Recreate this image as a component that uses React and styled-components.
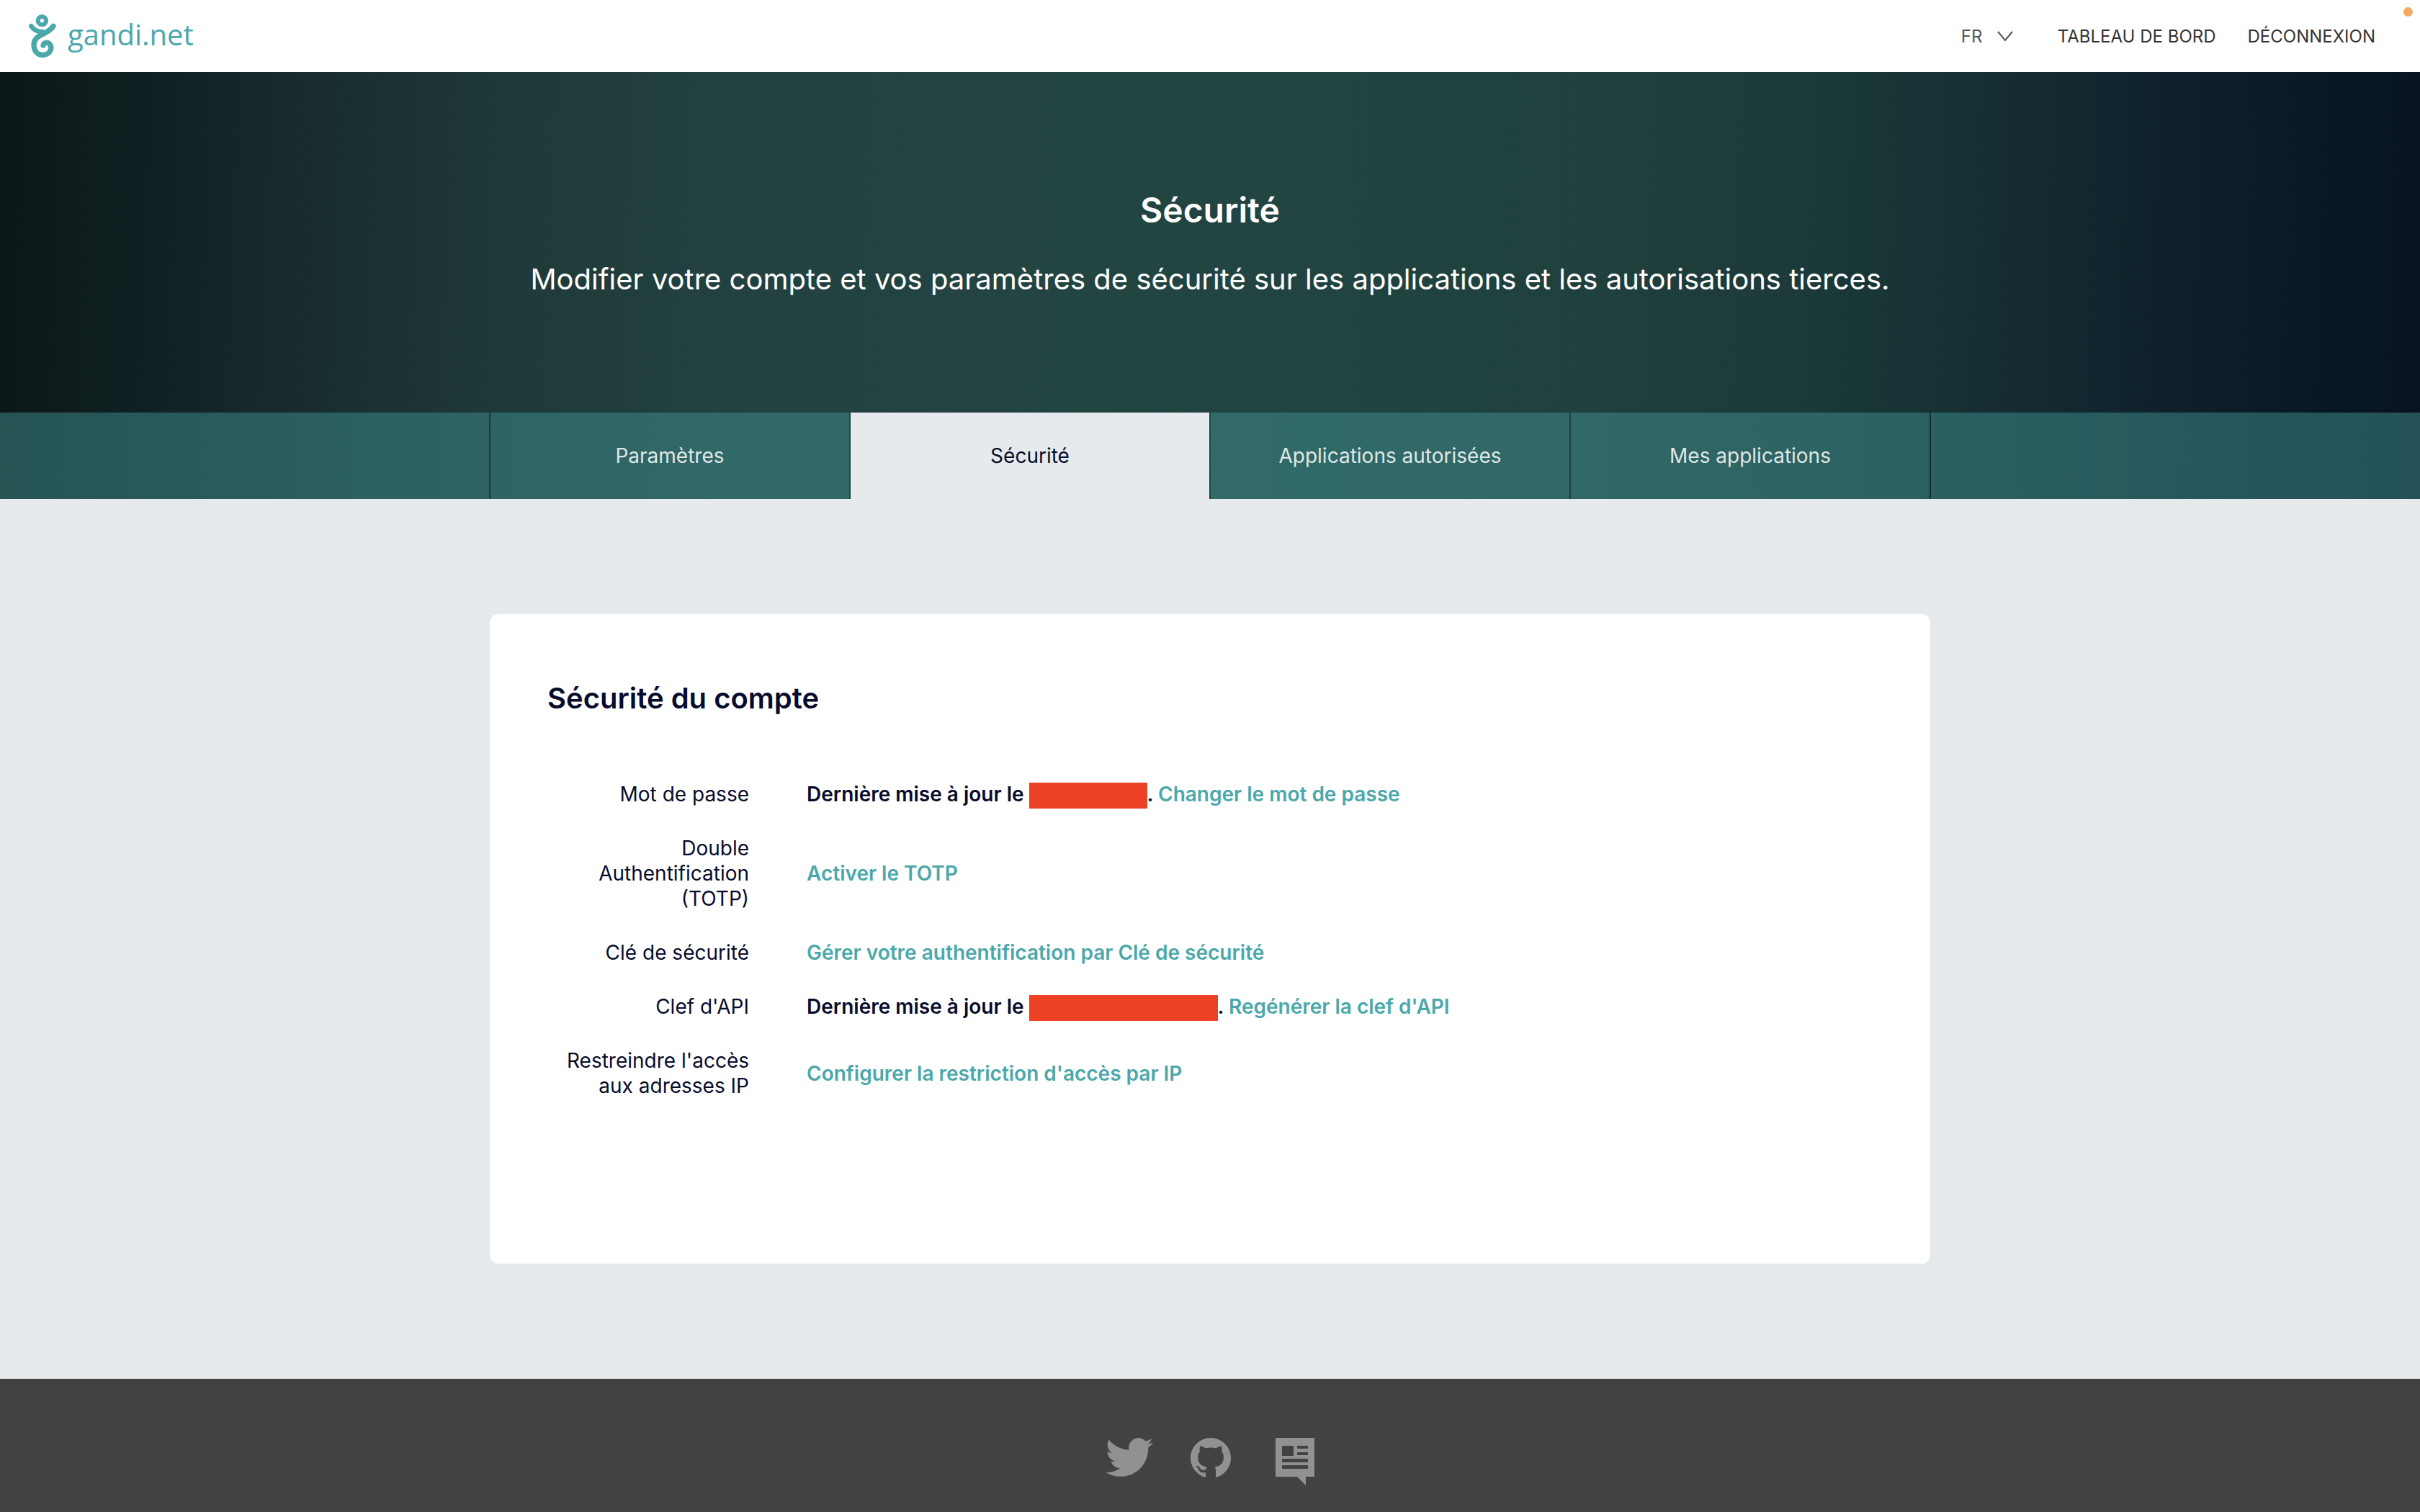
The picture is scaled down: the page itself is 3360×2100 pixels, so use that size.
import React from "react";
import styled, { createGlobalStyle } from "styled-components";
import { FaTwitter } from "react-icons/fa";

const colors = {
  ink: "#080c2c",
  teal: "#4aa8ab",
  surface: "#e6eaed",
  redacted: "#ec4125",
};

const GlobalStyle = createGlobalStyle`
  *, *::before, *::after { box-sizing: border-box; }
  body {
    margin: 0;
    font-family: Inter, "Liberation Sans", sans-serif;
    font-size: 28px;
    line-height: 35px;
    color: ${colors.ink};
    background: ${colors.surface};
  }
  h1, h2, p, dl, dt, dd { margin: 0; }
  a { text-decoration: none; }
`;

const Page = styled.div`
  min-height: 100vh;
  display: flex;
  flex-direction: column;
`;

const Header = styled.header`
  position: relative;
  display: flex;
  align-items: center;
  justify-content: space-between;
  height: 100px;
  padding: 0 62px 0 40px;
  background: #fff;
`;

const Brand = styled.a`
  display: flex;
  align-items: flex-start;
  gap: 16px;
  color: ${colors.teal};
  font-family: "Open Sans", "Liberation Sans", sans-serif;
  font-size: 40px;
  line-height: 56px;
`;

const BrandMark = styled.svg`
  width: 38px;
  height: 60px;
`;

const HeaderNav = styled.nav`
  display: flex;
  align-items: center;
  gap: 44px;
`;

const HeaderLink = styled.a`
  color: #333;
  font-size: 24px;
`;

const Language = styled.label`
  display: flex;
  align-items: center;
  margin-right: 18px;
  color: #555;
`;

const LanguageSelect = styled.select`
  appearance: none;
  width: 72px;
  margin-right: -22px;
  padding: 0;
  border: 0;
  background: transparent;
  color: inherit;
  font: inherit;
  font-size: 24px;
`;

const Chevron = styled.svg`
  width: 22px;
  height: 14px;
  pointer-events: none;
`;

const StatusDot = styled.span`
  position: absolute;
  top: 10px;
  right: 10px;
  width: 13px;
  height: 13px;
  border-radius: 50%;
  background: #f4ab5c;
`;

const Banner = styled.div`
  background: linear-gradient(
    92deg,
    #0b1716 0%,
    #102022 6%,
    #172a2c 12%,
    #1e3837 20%,
    #224140 30%,
    #234542 45%,
    #214441 55%,
    #1f403d 66%,
    #1b3938 75%,
    #142c31 83%,
    #0e202a 90%,
    #081724 96%,
    #081321 100%
  );
`;

const Hero = styled.section`
  padding: 160px 80px;
  color: #fff;
  text-align: center;
`;

const HeroTitle = styled.h1`
  margin-bottom: 40px;
  font-size: 48px;
  font-weight: 600;
  line-height: 63px;
`;

const HeroText = styled.p`
  font-size: 40px;
  line-height: 50px;
`;

const Tabs = styled.nav`
  display: grid;
  grid-template-columns: 1fr repeat(4, minmax(0, 498px)) 1fr;
  gap: 2px;
  height: 120px;

  &::before,
  &::after {
    content: "";
    background: rgba(63, 144, 144, 0.5);
  }
`;

const Tab = styled.a`
  display: flex;
  align-items: center;
  justify-content: center;
  color: ${(p) => (p.$active ? colors.ink : "rgba(255, 255, 255, 0.87)")};
  background: ${(p) => (p.$active ? colors.surface : "rgba(63, 144, 144, 0.5)")};
`;

const Main = styled.main`
  padding: 160px 80px;
`;

const Card = styled.section`
  max-width: 2000px;
  margin: 0 auto;
  padding: 92px 80px 229px;
  border-radius: 12px;
  background: #fff;
`;

const CardTitle = styled.h2`
  margin-bottom: 91px;
  font-size: 40px;
  font-weight: 600;
  line-height: 50px;
`;

const Settings = styled.dl`
  display: flex;
  flex-direction: column;
  gap: 40px;
`;

const Setting = styled.div`
  display: grid;
  grid-template-columns: 280px 1fr;
  align-items: center;
  gap: 80px;
`;

const SettingLabel = styled.dt`
  text-align: right;
`;

const SettingValue = styled.dd`
  font-weight: 600;
`;

const ActionLink = styled.a`
  color: ${colors.teal};
`;

const Redacted = styled.span`
  display: inline-block;
  width: ${(p) => p.$width}px;
  height: 36px;
  margin: -4px 0;
  vertical-align: middle;
  background: ${colors.redacted};
`;

const Footer = styled.footer`
  flex: 1;
  display: flex;
  align-items: flex-start;
  justify-content: center;
  gap: 52px;
  padding: 82px 80px 36px;
  background: #424242;
`;

const SocialLink = styled.a`
  display: flex;
  color: #919191;
`;

const TwitterGlyph = styled(FaTwitter)`
  width: 66px;
  height: 66px;
  margin: -6px 0;
`;

const GithubGlyph = styled.svg`
  width: 56px;
  height: 56px;
`;

const NewsGlyph = styled.svg`
  width: 64px;
  height: 66px;
`;

const tabs = ["Paramètres", "Sécurité", "Applications autorisées", "Mes applications"];

const settings = [
  { label: "Mot de passe", redacted: 164, action: "Changer le mot de passe" },
  { label: "Double Authentification (TOTP)", action: "Activer le TOTP" },
  { label: "Clé de sécurité", action: "Gérer votre authentification par Clé de sécurité" },
  { label: "Clef d'API", redacted: 262, action: "Regénérer la clef d'API" },
  { label: "Restreindre l'accès aux adresses IP", action: "Configurer la restriction d'accès par IP" },
];

function Logo() {
  return (
    <BrandMark viewBox="0 0 114 180" fill="none" stroke="currentColor" strokeLinecap="round" aria-hidden="true">
      <circle cx="55" cy="26" r="17" strokeWidth="18" />
      <path d="M10 49C22 68 40 73 58 73" strokeWidth="20" />
      <path
        d="M102 49C82 80 52 78 32 99C12 121 20 169 57 169C86 169 98 146 90 128C82 113 60 116 60 129"
        strokeWidth="22"
        strokeLinejoin="round"
      />
    </BrandMark>
  );
}

export default function App() {
  return (
    <Page>
      <GlobalStyle />
      <Header>
        <Brand href="#">
          <Logo />
          gandi.net
        </Brand>
        <HeaderNav>
          <Language>
            <LanguageSelect aria-label="Langue" defaultValue="FR">
              <option>FR</option>
            </LanguageSelect>
            <Chevron viewBox="0 0 22 14" fill="none" stroke="currentColor" strokeWidth="2" aria-hidden="true">
              <path d="M1 1l10 12L21 1" />
            </Chevron>
          </Language>
          <HeaderLink href="#">TABLEAU DE BORD</HeaderLink>
          <HeaderLink href="#">DÉCONNEXION</HeaderLink>
        </HeaderNav>
        <StatusDot />
      </Header>

      <Banner>
        <Hero>
          <HeroTitle>Sécurité</HeroTitle>
          <HeroText>
            Modifier votre compte et vos paramètres de sécurité sur les applications et les autorisations tierces.
          </HeroText>
        </Hero>
        <Tabs>
          {tabs.map((name) => (
            <Tab key={name} href="#" $active={name === "Sécurité"}>
              {name}
            </Tab>
          ))}
        </Tabs>
      </Banner>

      <Main>
        <Card>
          <CardTitle>Sécurité du compte</CardTitle>
          <Settings>
            {settings.map(({ label, redacted, action }) => (
              <Setting key={label}>
                <SettingLabel>{label}</SettingLabel>
                <SettingValue>
                  {redacted && (
                    <>
                      Dernière mise à jour le <Redacted $width={redacted} />.{" "}
                    </>
                  )}
                  <ActionLink href="#">{action}</ActionLink>
                </SettingValue>
              </Setting>
            ))}
          </Settings>
        </Card>
      </Main>

      <Footer>
        <SocialLink href="#" aria-label="Twitter">
          <TwitterGlyph />
        </SocialLink>
        <SocialLink href="#" aria-label="GitHub">
          <GithubGlyph viewBox="0 0 16 16" fill="currentColor" aria-hidden="true">
            <path d="M8 0C3.58 0 0 3.58 0 8c0 3.54 2.29 6.53 5.47 7.59.4.07.55-.17.55-.38 0-.19-.01-.82-.01-1.49-2.01.37-2.53-.49-2.69-.94-.09-.23-.48-.94-.82-1.13-.28-.15-.68-.52-.01-.53.63-.01 1.08.58 1.23.82.72 1.21 1.87.87 2.33.66.07-.52.28-.87.51-1.07-1.78-.2-3.64-.89-3.64-3.95 0-.87.31-1.59.82-2.15-.08-.2-.36-1.02.08-2.12 0 0 .67-.21 2.2.82.64-.18 1.32-.27 2-.27.68 0 1.36.09 2 .27 1.53-1.04 2.2-.82 2.2-.82.44 1.1.16 1.92.08 2.12.51.56.82 1.27.82 2.15 0 3.07-1.87 3.75-3.65 3.95.29.25.54.73.54 1.48 0 1.07-.01 1.93-.01 2.2 0 .21.15.46.55.38A8.013 8.013 0 0016 8c0-4.42-3.58-8-8-8z" />
          </GithubGlyph>
        </SocialLink>
        <SocialLink href="#" aria-label="Actualités">
          <NewsGlyph viewBox="-10 0 64 66" fill="currentColor" aria-hidden="true">
            <path
              fillRule="evenodd"
              d="M0 0h54v54H42v12L30 54H0zM9 11v14h16V11zM30 11v4h15v-4zM30 20v4h15v-4zM9 29v5h36v-5zM9 38v5h36v-5z"
            />
          </NewsGlyph>
        </SocialLink>
      </Footer>
    </Page>
  );
}
